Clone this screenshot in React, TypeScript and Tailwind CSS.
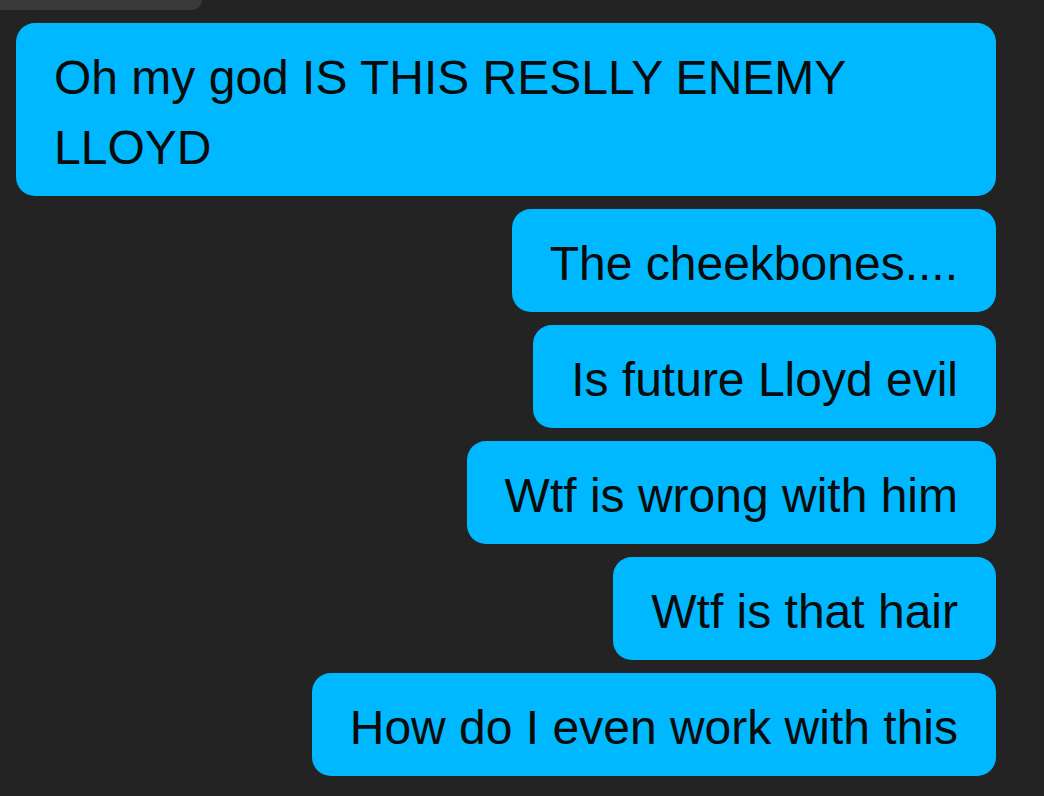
const messages = [
  "The cheekbones....",
  "Is future Lloyd evil",
  "Wtf is wrong with him",
  "Wtf is that hair",
  "How do I even work with this",
];

const Bubble = ({ text, full }: { text: string; full?: boolean }) => (
  <div
    className={`${full ? "self-stretch" : "self-end"} rounded-[19px] bg-[#00b8ff] pt-[20px] pb-[13px] pl-[38px] pr-[38px] text-[48px] leading-[70px] text-[#0b0b0b]`}
  >
    {text}
  </div>
);

export default function App() {
  return (
    <div
      className="min-h-[796px] w-full bg-[#232323]"
      style={{ fontFamily: '"Liberation Sans", Arial, sans-serif' }}
    >
      {/* previous message peeking in at top */}
      <div className="h-[10px] w-[202px] rounded-br-[14px] bg-[#3a3a3a]" />

      <div className="mt-[13px] flex flex-col gap-[13px] pl-[16px] pr-[48px]">
        <Bubble text="Oh my god IS THIS RESLLY ENEMY LLOYD" full />
        {messages.map((m, i) => (
          <Bubble key={i} text={m} />
        ))}
      </div>
    </div>
  );
}
